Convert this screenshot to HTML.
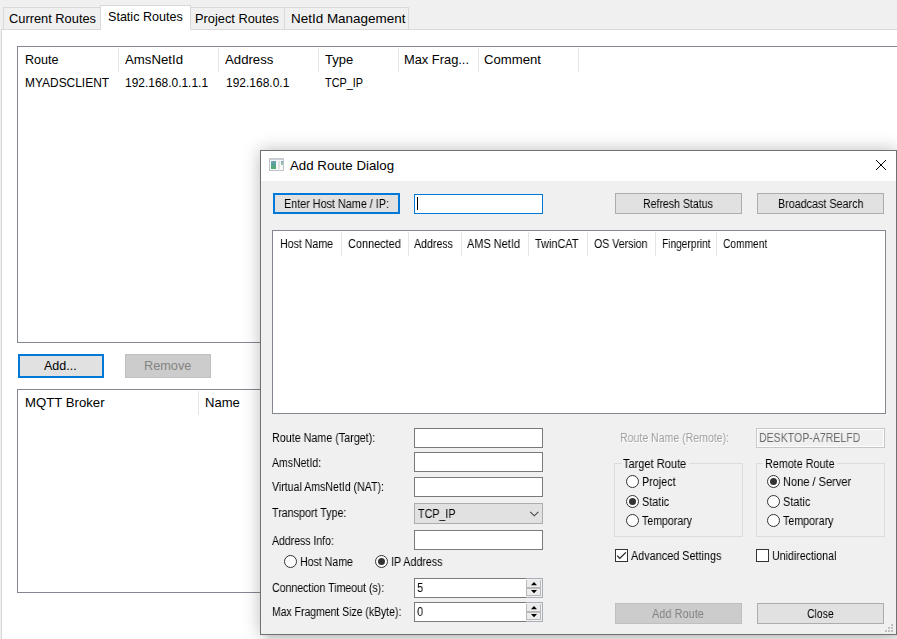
<!DOCTYPE html>
<html><head><meta charset="utf-8"><title>Add Route Dialog</title>
<style>
html,body{margin:0;padding:0}
body{width:897px;height:639px;background:#f0f0f0;position:relative;overflow:hidden;font-family:"Liberation Sans",sans-serif;color:#000}
.b{position:absolute;box-sizing:border-box}
.t{position:absolute;white-space:pre;line-height:1;transform-origin:0 0;display:block}
.tab{background:#f0f0f0;border:1px solid #d9d9d9;border-bottom:none;top:7px;height:22px}
.lv{background:#fff;border:1px solid #828790}
.sep{width:1px;background:#e5e5e5}
.btn{background:#e1e1e1;border:1px solid #adadad}
.btn.f{border:2px solid #0078d7}
.btn.d{background:#cccccc;border-color:#bfbfbf}
.in{background:#fff;border:1px solid #7a7a7a;left:414px;width:129px;height:20px}
.rad{width:13px;height:13px;border-radius:50%;border:1px solid #333;background:#fff}
.rad.on::after{content:"";position:absolute;left:2px;top:2px;width:7px;height:7px;border-radius:50%;background:#333}
.chk{width:13px;height:13px;border:1px solid #333;background:#fff}
.grp{border:1px solid #dcdcdc;top:463px;width:129px;height:74px}
.leg{background:#f0f0f0;top:458px;height:12px}
.dot{width:2px;height:2px;background:#bfbfbf}
svg{position:absolute;overflow:visible}
.g{will-change:transform}

</style></head>
<body>
<!-- main window: tab control -->
<div class="b" style="left:1px;top:29px;width:900px;height:620px;background:#fff;border-left:1px solid #d9d9d9;border-top:1px solid #d9d9d9"></div>
<div class="b tab" style="left:3px;width:98px"></div>
<div class="b tab" style="left:190px;width:95px"></div>
<div class="b tab" style="left:284px;width:125px"></div>
<div class="b tab" style="left:100px;width:91px;top:5px;height:25px;background:#fff"></div>
<!-- list 1 -->
<div class="b lv" style="left:17px;top:46px;width:900px;height:297px"></div>
<div class="b sep" style="left:118px;top:48px;height:24px"></div>
<div class="b sep" style="left:218px;top:48px;height:24px"></div>
<div class="b sep" style="left:318px;top:48px;height:24px"></div>
<div class="b sep" style="left:398px;top:48px;height:24px"></div>
<div class="b sep" style="left:478px;top:48px;height:24px"></div>
<div class="b sep" style="left:578px;top:48px;height:24px"></div>
<!-- buttons -->
<div class="b btn f" style="left:18px;top:354px;width:86px;height:24px"></div>
<div class="b btn d" style="left:125px;top:354px;width:86px;height:24px"></div>
<!-- list 2 -->
<div class="b lv" style="left:17px;top:389px;width:900px;height:204px"></div>
<div class="b sep" style="left:198px;top:391px;height:24px"></div>

<!-- dialog -->
<div class="b" style="left:266px;top:620px;width:640px;height:15px;box-shadow:0 4px 6px rgba(0,0,0,.11)"></div>
<div class="b" style="left:260px;top:150px;width:637px;height:485px;background:#f0f0f0;border:1px solid #707070;box-shadow:0 0 16px rgba(0,0,0,.27)"></div>
<div class="b" style="left:261px;top:151px;width:635px;height:30px;background:#fff"></div>
<!-- title icon -->
<div class="b" style="left:269px;top:158px;width:15px;height:13px;background:#f7f7f7;border:1px solid #bdc4cb;border-top:2px solid #c9ced4"></div>
<div class="b" style="left:271px;top:161px;width:5px;height:8px;background:linear-gradient(170deg,#7aa3c8 0%,#57a294 45%,#55b065 100%)"></div>
<div class="b" style="left:278px;top:161px;width:2px;height:8px;background:#e2e2e2"></div>
<div class="b" style="left:281px;top:161px;width:2px;height:4px;background:linear-gradient(180deg,#7a9fd4,#a6d8a0)"></div>
<!-- close X -->
<svg style="left:876px;top:160px" width="10" height="10" viewBox="0 0 10 10"><path d="M0 0L10 10M10 0L0 10" stroke="#000" stroke-width="1" fill="none"/></svg>
<!-- top row -->
<div class="b btn f" style="left:273px;top:193px;width:127px;height:21px"></div>
<div class="b in" style="top:194px;border-color:#0078d7"></div>
<div class="b" style="left:417px;top:197px;width:1px;height:13px;background:#000"></div>
<div class="b btn" style="left:615px;top:193px;width:127px;height:21px"></div>
<div class="b btn" style="left:757px;top:193px;width:127px;height:21px"></div>
<!-- dialog list -->
<div class="b lv" style="left:272px;top:230px;width:614px;height:184px"></div>
<div class="b sep" style="left:341px;top:232px;height:24px"></div>
<div class="b sep" style="left:408px;top:232px;height:24px"></div>
<div class="b sep" style="left:461px;top:232px;height:24px"></div>
<div class="b sep" style="left:528px;top:232px;height:24px"></div>
<div class="b sep" style="left:587px;top:232px;height:24px"></div>
<div class="b sep" style="left:655px;top:232px;height:24px"></div>
<div class="b sep" style="left:716px;top:232px;height:24px"></div>
<!-- left form -->
<div class="b in" style="top:428px"></div>
<div class="b in" style="top:452px"></div>
<div class="b in" style="top:477px"></div>
<div class="b btn" style="left:414px;top:503px;width:129px;height:21px"></div>
<svg style="left:530px;top:511px" width="10" height="6" viewBox="0 0 10 6"><path d="M0.2 0.8L4.3 4.8L8.4 0.8" stroke="#444" stroke-width="1.1" fill="none"/></svg>
<div class="b in" style="top:530px"></div>
<div class="b rad" style="left:284px;top:555px"></div>
<div class="b rad on" style="left:375px;top:555px"></div>
<!-- spinners -->
<div class="b" style="left:414px;top:578px;width:129px;height:20px;border:1px solid #a9afba;background:#f0f0f0"></div>
<div class="b" style="left:414px;top:578px;width:112px;height:20px;border:1px solid #7a7a7a;border-right:none;background:#fff"></div>
<div class="b" style="left:526px;top:580px;width:15px;height:8px;background:#ececec;border:1px solid #b9b9b9;border-top:none"></div>
<div class="b" style="left:526px;top:588px;width:15px;height:8px;background:#ececec;border:1px solid #b9b9b9"></div>
<svg style="left:530.5px;top:582px" width="6" height="12" viewBox="0 0 6 12"><path d="M0 3.2L3 0L6 3.2Z M0 8L3 11.2L6 8Z" fill="#000"/></svg>
<div class="b" style="left:414px;top:602px;width:129px;height:20px;border:1px solid #a9afba;background:#f0f0f0"></div>
<div class="b" style="left:414px;top:602px;width:112px;height:20px;border:1px solid #7a7a7a;border-right:none;background:#fff"></div>
<div class="b" style="left:526px;top:604px;width:15px;height:8px;background:#ececec;border:1px solid #b9b9b9;border-top:none"></div>
<div class="b" style="left:526px;top:612px;width:15px;height:8px;background:#ececec;border:1px solid #b9b9b9"></div>
<svg style="left:530.5px;top:606px" width="6" height="12" viewBox="0 0 6 12"><path d="M0 3.2L3 0L6 3.2Z M0 8L3 11.2L6 8Z" fill="#000"/></svg>
<!-- right form -->
<div class="b" style="left:756px;top:428px;width:129px;height:20px;border:1px solid #c6c6c6;background:#f0f0f0;box-shadow:inset 0 0 0 1px #fff"></div>
<div class="b grp" style="left:614px"></div>
<div class="b leg" style="left:622px;width:67px"></div>
<div class="b grp" style="left:756px"></div>
<div class="b leg" style="left:763px;width:74px"></div>
<div class="b rad" style="left:626px;top:475px"></div>
<div class="b rad on" style="left:626px;top:495px"></div>
<div class="b rad" style="left:626px;top:514px"></div>
<div class="b rad on" style="left:767px;top:475px"></div>
<div class="b rad" style="left:767px;top:495px"></div>
<div class="b rad" style="left:767px;top:514px"></div>
<div class="b chk" style="left:615px;top:549px"></div>
<svg style="left:616px;top:550px" width="11" height="11" viewBox="0 0 11 11"><path d="M1.2 5.6L3.8 8.4L9.9 2.4" stroke="#222" stroke-width="1.3" fill="none"/></svg>
<div class="b chk" style="left:756px;top:549px"></div>
<div class="b btn d" style="left:615px;top:603px;width:127px;height:21px"></div>
<div class="b btn" style="left:757px;top:603px;width:127px;height:21px"></div>
<!-- grip -->
<div class="b dot" style="left:891px;top:624px"></div>
<div class="b dot" style="left:888px;top:627px"></div>
<div class="b dot" style="left:891px;top:627px"></div>
<div class="b dot" style="left:885px;top:630px"></div>
<div class="b dot" style="left:888px;top:630px"></div>
<div class="b dot" style="left:891px;top:630px"></div>

<span class="t" style="left:8.7px;top:11.7px;font-size:13px;transform:scaleX(0.987)">Current Routes</span>
<span class="t" style="left:107.8px;top:9.7px;font-size:13px;transform:scaleX(0.967)">Static Routes</span>
<span class="t" style="left:194.6px;top:11.7px;font-size:13px;transform:scaleX(0.985)">Project Routes</span>
<span class="t" style="left:290.7px;top:11.7px;font-size:13px;transform:scaleX(1.035)">NetId Management</span>
<span class="t" style="left:25.0px;top:52.7px;font-size:13px;transform:scaleX(0.965)">Route</span>
<span class="t" style="left:124.5px;top:52.7px;font-size:13px;transform:scaleX(1.016)">AmsNetId</span>
<span class="t" style="left:224.5px;top:52.7px;font-size:13px;transform:scaleX(1.015)">Address</span>
<span class="t" style="left:325.0px;top:52.7px;font-size:13px;transform:scaleX(0.997)">Type</span>
<span class="t" style="left:404.3px;top:52.7px;font-size:13px;transform:scaleX(0.989)">Max Frag...</span>
<span class="t" style="left:484.1px;top:52.7px;font-size:13px;transform:scaleX(1.011)">Comment</span>
<span class="t" style="left:25.0px;top:75.7px;font-size:13px;transform:scaleX(0.919)">MYADSCLIENT</span>
<span class="t" style="left:125.3px;top:75.7px;font-size:13px;transform:scaleX(0.919)">192.168.0.1.1.1</span>
<span class="t" style="left:225.5px;top:75.7px;font-size:13px;transform:scaleX(0.922)">192.168.0.1</span>
<span class="t" style="left:325.0px;top:75.7px;font-size:13px;transform:scaleX(0.835)">TCP_IP</span>
<span class="t" style="left:43.7px;top:358.7px;font-size:13px;transform:scaleX(0.963)">Add...</span>
<span class="t" style="left:143.8px;top:358.7px;font-size:13px;transform:scaleX(0.977);color:#838383">Remove</span>
<span class="t" style="left:24.9px;top:395.7px;font-size:13px;transform:scaleX(1.014)">MQTT Broker</span>
<span class="t" style="left:205.1px;top:395.7px;font-size:13px;transform:scaleX(1.006)">Name</span>
<span class="t" style="left:289.6px;top:158.7px;font-size:13px;transform:scaleX(1.021)">Add Route Dialog</span>
<span class="t g" style="left:283.6px;top:198.1px;font-size:12.5px;transform:scaleX(0.864)">Enter Host Name / IP:</span>
<span class="t g" style="left:643.2px;top:198.1px;font-size:12.5px;transform:scaleX(0.845)">Refresh Status</span>
<span class="t g" style="left:777.7px;top:198.1px;font-size:12.5px;transform:scaleX(0.860)">Broadcast Search</span>
<span class="t g" style="left:280.3px;top:238.1px;font-size:12.5px;transform:scaleX(0.848)">Host Name</span>
<span class="t g" style="left:347.6px;top:238.1px;font-size:12.5px;transform:scaleX(0.875)">Connected</span>
<span class="t g" style="left:414.3px;top:238.1px;font-size:12.5px;transform:scaleX(0.850)">Address</span>
<span class="t g" style="left:467.0px;top:238.1px;font-size:12.5px;transform:scaleX(0.877)">AMS NetId</span>
<span class="t g" style="left:535.3px;top:238.1px;font-size:12.5px;transform:scaleX(0.872)">TwinCAT</span>
<span class="t g" style="left:593.9px;top:238.1px;font-size:12.5px;transform:scaleX(0.846)">OS Version</span>
<span class="t g" style="left:662.0px;top:238.1px;font-size:12.5px;transform:scaleX(0.813)">Fingerprint</span>
<span class="t g" style="left:722.9px;top:238.1px;font-size:12.5px;transform:scaleX(0.816)">Comment</span>
<span class="t g" style="left:271.7px;top:432.1px;font-size:12.5px;transform:scaleX(0.859)">Route Name (Target):</span>
<span class="t g" style="left:271.6px;top:457.1px;font-size:12.5px;transform:scaleX(0.841)">AmsNetId:</span>
<span class="t g" style="left:271.6px;top:481.1px;font-size:12.5px;transform:scaleX(0.847)">Virtual AmsNetId (NAT):</span>
<span class="t g" style="left:271.7px;top:507.1px;font-size:12.5px;transform:scaleX(0.857)">Transport Type:</span>
<span class="t g" style="left:271.6px;top:534.6px;font-size:12.5px;transform:scaleX(0.840)">Address Info:</span>
<span class="t g" style="left:300.2px;top:556.1px;font-size:12.5px;transform:scaleX(0.846)">Host Name</span>
<span class="t g" style="left:390.9px;top:556.1px;font-size:12.5px;transform:scaleX(0.855)">IP Address</span>
<span class="t g" style="left:271.7px;top:582.1px;font-size:12.5px;transform:scaleX(0.845)">Connection Timeout (s):</span>
<span class="t g" style="left:271.7px;top:606.1px;font-size:12.5px;transform:scaleX(0.835)">Max Fragment Size (kByte):</span>
<span class="t g" style="left:418.1px;top:508.1px;font-size:12.5px;transform:scaleX(0.855)">TCP_IP</span>
<span class="t g" style="left:416.9px;top:582.1px;font-size:12.5px;transform:scaleX(0.892)">5</span>
<span class="t g" style="left:416.9px;top:606.1px;font-size:12.5px;transform:scaleX(0.892)">0</span>
<span class="t g" style="left:619.6px;top:432.1px;font-size:12.5px;transform:scaleX(0.844);color:#a0a0a0;text-shadow:1px 1px 0 #fff">Route Name (Remote):</span>
<span class="t g" style="left:759.2px;top:432.1px;font-size:12.5px;transform:scaleX(0.844);color:#6d6d6d">DESKTOP-A7RELFD</span>
<span class="t g" style="left:623.3px;top:458.1px;font-size:12.5px;transform:scaleX(0.883)">Target Route</span>
<span class="t g" style="left:642.1px;top:476.1px;font-size:12.5px;transform:scaleX(0.861)">Project</span>
<span class="t g" style="left:642.1px;top:496.1px;font-size:12.5px;transform:scaleX(0.867)">Static</span>
<span class="t g" style="left:642.1px;top:515.1px;font-size:12.5px;transform:scaleX(0.847)">Temporary</span>
<span class="t g" style="left:764.8px;top:458.1px;font-size:12.5px;transform:scaleX(0.863)">Remote Route</span>
<span class="t g" style="left:782.9px;top:476.1px;font-size:12.5px;transform:scaleX(0.884)">None / Server</span>
<span class="t g" style="left:782.9px;top:496.1px;font-size:12.5px;transform:scaleX(0.876)">Static</span>
<span class="t g" style="left:782.9px;top:515.1px;font-size:12.5px;transform:scaleX(0.854)">Temporary</span>
<span class="t g" style="left:630.6px;top:550.1px;font-size:12.5px;transform:scaleX(0.868)">Advanced Settings</span>
<span class="t g" style="left:771.7px;top:550.1px;font-size:12.5px;transform:scaleX(0.850)">Unidirectional</span>
<span class="t g" style="left:652.3px;top:608.1px;font-size:12.5px;transform:scaleX(0.877);color:#838383">Add Route</span>
<span class="t g" style="left:806.7px;top:608.1px;font-size:12.5px;transform:scaleX(0.835)">Close</span>
</body></html>
